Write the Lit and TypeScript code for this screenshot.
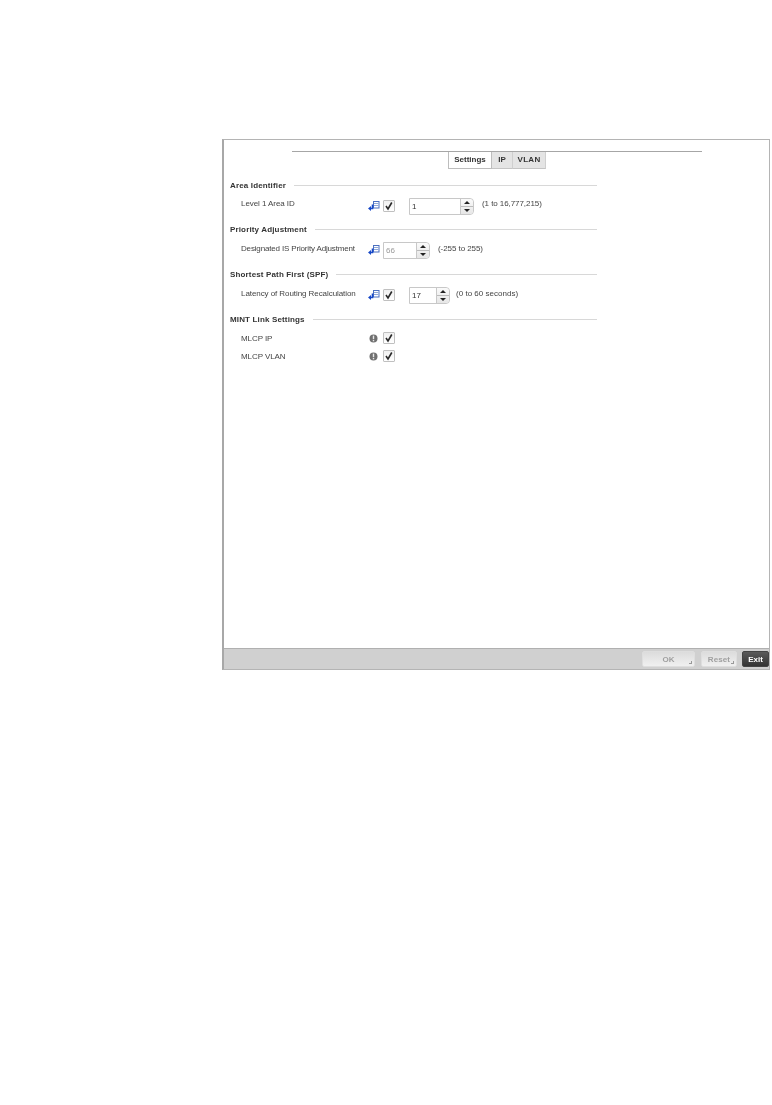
import { LitElement, html, css } from "lit";
import { customElement } from "lit/decorators.js";

const enterIcon = html`<svg class="ico" width="12" height="11" viewBox="0 0 12 11">
  <rect x="5.5" y="0.5" width="5.5" height="6.5" fill="#fff" stroke="#4a6fc0"/>
  <path d="M6 2.5h4.5M6 4.5h4.5" stroke="#8fa8d8"/>
  <path d="M4.5 3.5v4H2" fill="none" stroke="#1648c8" stroke-width="1.6"/>
  <path d="M3 5L0 7.5L3 10z" fill="#1648c8"/>
</svg>`;

const infoIcon = html`<svg class="ico" width="9" height="9" viewBox="0 0 9 9">
  <circle cx="4.5" cy="4.5" r="4" fill="#707070"/>
  <rect x="3.8" y="1.6" width="1.4" height="3.6" fill="#e8e8e8"/>
  <rect x="3.8" y="6" width="1.4" height="1.3" fill="#e8e8e8"/>
</svg>`;

const check = () => html`<span class="cb">
  <svg width="10" height="10" viewBox="0 0 10 10"><path d="M2 5L4 8L7.8 1.5" fill="none" stroke="#2a2a2a" stroke-width="1.6"/></svg>
</span>`;

const spinner = (value: string, width: number, disabled = false) => html`<span class="spin ${disabled ? "dis" : ""}">
  <span class="val" style="width:${width}px">${value}</span>
  <span class="arrows"><span class="up"></span><span class="down"></span></span>
</span>`;

@customElement("app-root")
export class AppRoot extends LitElement {
  static styles = css`
    :host { display: block; height: 1105px; background: #fff; font-family: "Liberation Sans", Arial, sans-serif; color: #333; overflow: hidden; }
    .frame { box-sizing: border-box; margin: 139px 0 0 222px; width: 548px; height: 531px; border: 1px solid #b4b4b4; border-left: 2px solid #a8a8a8; display: flex; flex-direction: column; filter: blur(0.3px); }
    .content { flex: 1; display: flex; flex-direction: column; min-height: 0; }
    .tabs-wrap { margin: 11px 67px 0 68px; border-top: 1px solid #a6a6a6; display: flex; justify-content: center; }
    .tabs { display: flex; }
    .tab { box-sizing: border-box; height: 17px; padding-top: 3px; font-size: 8px; font-weight: 700; color: #333; text-align: center; background: #e4e4e4; border-bottom: 1px solid #c4c4c4; border-right: 1px solid #cfcfcf; }
    .tab.on { background: #fff; width: 44px; border-left: 1px solid #bdbdbd; border-right: 1px solid #bdbdbd; border-bottom: 1px solid #bdbdbd; }
    .tab.ip { width: 21px; }
    .tab.vlan { width: 33px; letter-spacing: 0.3px; }
    .form { width: 367px; margin: 12px 0 0 6px; display: flex; flex-direction: column; }
    .sec { display: flex; align-items: center; gap: 8px; height: 9px; font-size: 8px; font-weight: 700; color: #333; white-space: nowrap; letter-spacing: 0.15px; }
    .sec::after { content: ""; flex: 1; height: 1px; background: #d8d8d8; }
    .sec.next { margin-top: 9px; }
    .sec.wide { margin-top: 10px; }
    .row { display: flex; align-items: center; height: 20px; margin-top: 6px; font-size: 8px; color: #444; }
    .row.small { height: 18px; margin-top: 0; }
    .row.small.first { margin-top: 5px; }
    .lbl { width: 127px; padding-left: 11px; box-sizing: border-box; white-space: nowrap; letter-spacing: -0.07px; position: relative; top: -2px; }
    .lbl.long { letter-spacing: -0.16px; }
    .row.small .lbl { top: 0; }
    .row.high .lbl, .row.high .hint { top: -3px; }
    .ico { flex: none; display: block; }
    .slot { width: 15px; flex: none; display: flex; justify-content: flex-start; margin-left: 11px; }
    .slot.info { padding-left: 1px; box-sizing: border-box; }
    .cb { box-sizing: border-box; width: 12px; height: 12px; border: 1px solid #c0c0c0; border-radius: 1px; background: linear-gradient(#f0f0f0, #fff); display: flex; align-items: center; justify-content: center; flex: none; }
    .gap { width: 14px; flex: none; }
    .spin { display: inline-flex; height: 17px; box-sizing: border-box; border: 1px solid #c8c8c8; border-radius: 0 4px 4px 0; background: #fff; flex: none; }
    .val { box-sizing: border-box; padding-left: 2px; font-size: 8px; line-height: 16px; color: #333; border-right: 1px solid #c8c8c8; }
    .dis .val { color: #9a9a9a; }
    .arrows { width: 12px; display: flex; flex-direction: column; background: linear-gradient(#fafafa, #e6e6e6); border-radius: 0 4px 4px 0; }
    .up, .down { flex: 1; display: flex; align-items: center; justify-content: center; }
    .up { border-bottom: 1px solid #bbb; }
    .up::before { content: ""; border-left: 3px solid transparent; border-right: 3px solid transparent; border-bottom: 3px solid #222; }
    .down::before { content: ""; border-left: 3px solid transparent; border-right: 3px solid transparent; border-top: 3px solid #222; }
    .hint { margin-left: 8px; font-size: 8px; color: #444; letter-spacing: -0.07px; white-space: nowrap; position: relative; top: -2px; }
    .hint.tight { margin-left: 6px; letter-spacing: 0.02px; }
    .footer { height: 20px; flex: none; background: #d0d0d0; border-top: 1px solid #b0b0b0; display: flex; justify-content: flex-end; align-items: center; }
    .btn { box-sizing: border-box; height: 16px; border-radius: 2px; font-size: 8px; font-weight: 700; text-align: center; line-height: 15px; position: relative; background: linear-gradient(#dcdcdc, #f0f0f0); border: 1px solid #dedede; color: #a0a0a0; letter-spacing: 0.1px; }
    .btn::after { content: ""; position: absolute; right: 2px; bottom: 2px; width: 2px; height: 2px; border-right: 1px solid #999; border-bottom: 1px solid #999; }
    .ok { width: 53px; margin-right: 6px; }
    .reset { width: 36px; margin-right: 5px; }
    .exit { width: 27px; background: linear-gradient(#5a5a5a, #333); border-color: #444; color: #fff; letter-spacing: 0; }
    .exit::after { display: none; }
  `;

  render() {
    return html`<div class="frame">
      <div class="content">
        <div class="tabs-wrap"><div class="tabs">
          <div class="tab on">Settings</div><div class="tab ip">IP</div><div class="tab vlan">VLAN</div>
        </div></div>
        <div class="form">
          <div class="sec">Area Identifier</div>
          <div class="row high">
            <span class="lbl">Level 1 Area ID</span><span class="slot">${enterIcon}</span>${check()}<span class="gap"></span>${spinner("1", 51)}<span class="hint">(1 to 16,777,215)</span>
          </div>
          <div class="sec next">Priority Adjustment</div>
          <div class="row">
            <span class="lbl long">Designated IS Priority Adjustment</span><span class="slot">${enterIcon}</span>${spinner("66", 33, true)}<span class="hint">(-255 to 255)</span>
          </div>
          <div class="sec wide">Shortest Path First (SPF)</div>
          <div class="row">
            <span class="lbl">Latency of Routing Recalculation</span><span class="slot">${enterIcon}</span>${check()}<span class="gap"></span>${spinner("17", 27)}<span class="hint tight">(0 to 60 seconds)</span>
          </div>
          <div class="sec wide">MINT Link Settings</div>
          <div class="row small first">
            <span class="lbl">MLCP IP</span><span class="slot info">${infoIcon}</span>${check()}
          </div>
          <div class="row small">
            <span class="lbl">MLCP VLAN</span><span class="slot info">${infoIcon}</span>${check()}
          </div>
        </div>
      </div>
      <div class="footer">
        <div class="btn ok">OK</div><div class="btn reset">Reset</div><div class="btn exit">Exit</div>
      </div>
    </div>`;
  }
}
